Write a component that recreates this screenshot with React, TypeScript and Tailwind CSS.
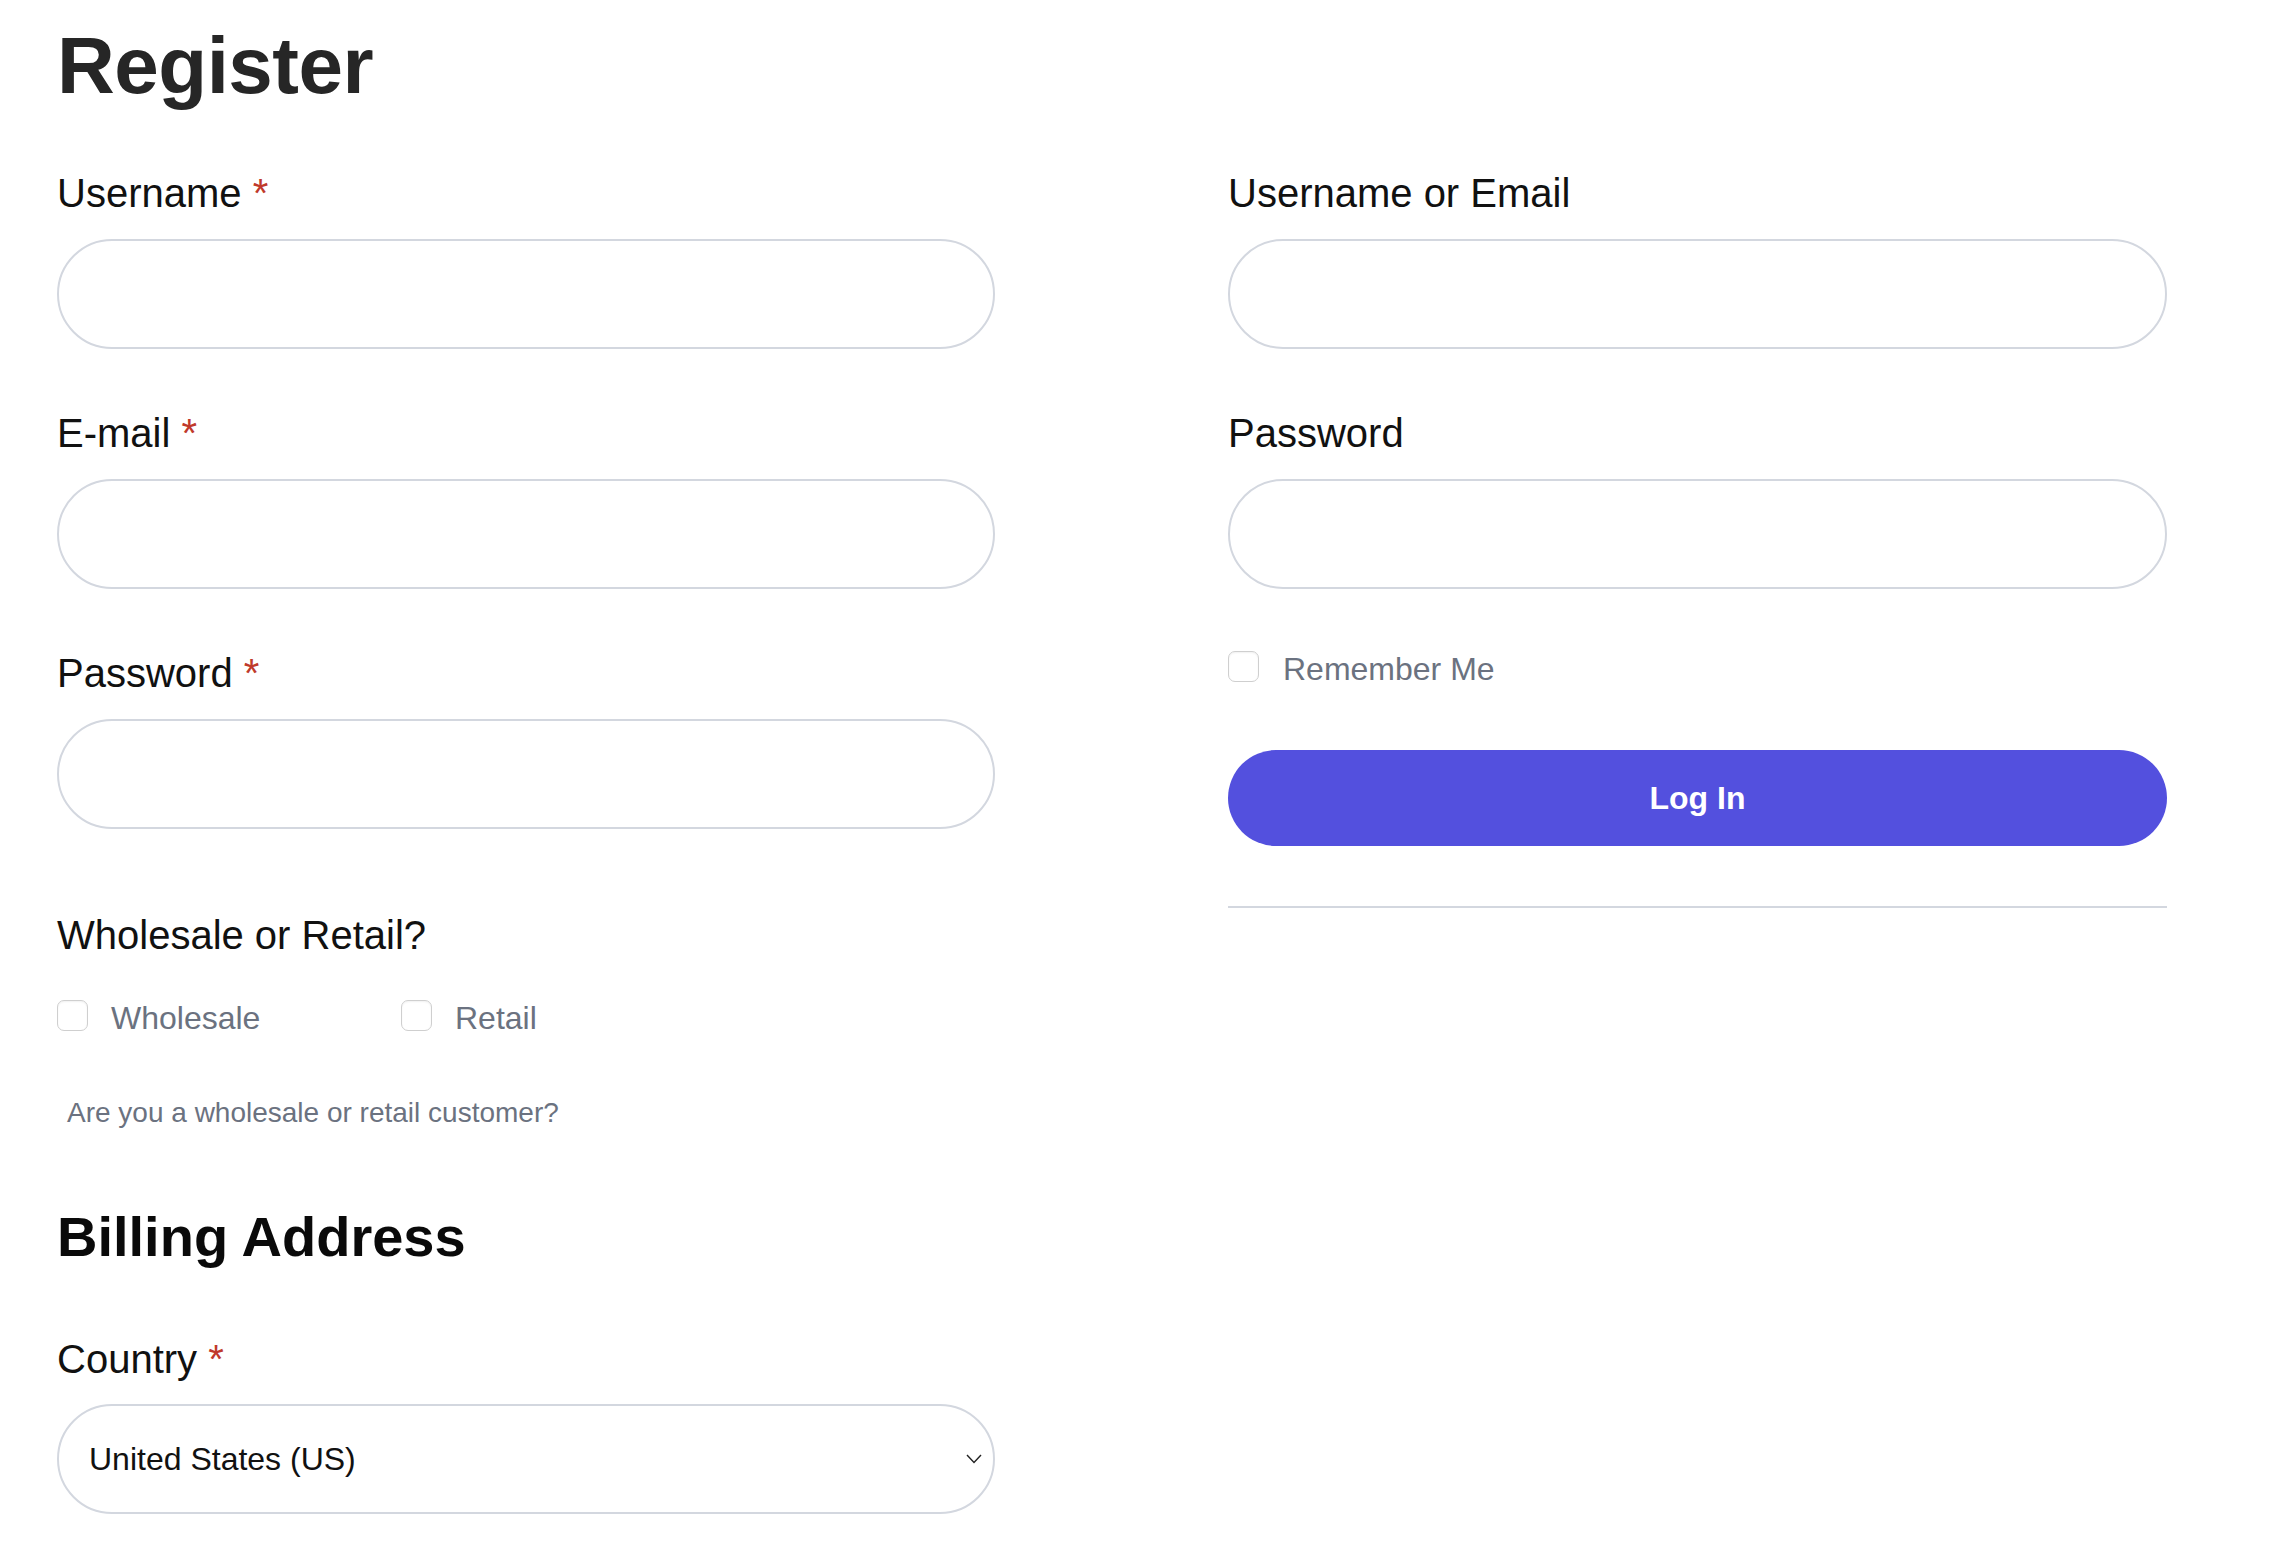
import { useState } from "react";

const font = "font-['Liberation_Sans',Arial,Helvetica,sans-serif]";

function Required() {
  return <span className="text-[#c0392b]"> *</span>;
}

function Field({ label, required, type = "text", last }: { label: string; required?: boolean; type?: string; last?: boolean }) {
  return (
    <div className={last ? "" : "mb-[64px]"}>
      <label className="block text-[40px] leading-none text-[#111111] mb-[26px]">
        {label}
        {required && <Required />}
      </label>
      <input
        type={type}
        className="block w-full h-[110px] rounded-full border-2 border-[#d3d7df] bg-white px-[30px] text-[32px] outline-none"
      />
    </div>
  );
}

function Check({ label, className = "" }: { label: string; className?: string }) {
  const [checked, setChecked] = useState(false);
  return (
    <label className={`flex items-start gap-[23px] cursor-pointer ${className}`}>
      <input
        type="checkbox"
        checked={checked}
        onChange={() => setChecked(!checked)}
        className="appearance-none shrink-0 w-[31px] h-[31px] rounded-[7px] border border-[#cfcfcf] bg-white shadow-[inset_0_1px_2px_rgba(0,0,0,0.06)] checked:bg-[#5350de] checked:border-[#5350de]"
      />
      <span className="mt-[2px] text-[32px] leading-none text-[#6b7280]">{label}</span>
    </label>
  );
}

export default function App() {
  return (
    <div className={`${font} min-h-screen bg-white pt-[26px] px-[57px]`}>
      <div className="flex gap-[233px]">
        {/* Register */}
        <div className="w-[938px] shrink-0">
          <h1 className="text-[80px] leading-none font-bold tracking-[-0.5px] text-[#262626] mb-[67px]">Register</h1>

          <Field label="Username" required />
          <Field label="E-mail" required type="email" />
          <Field label="Password" required type="password" last />

          <p className="mt-[86px] text-[40px] leading-none text-[#111111]">Wholesale or Retail?</p>
          <div className="mt-[45px] flex">
            <Check label="Wholesale" className="w-[344px]" />
            <Check label="Retail" />
          </div>
          <p className="mt-[65px] ml-[10px] text-[28px] leading-none text-[#6b7280]">Are you a wholesale or retail customer?</p>

          <h2 className="mt-[82px] text-[56px] leading-none font-bold text-[#0a0a0a]">Billing Address</h2>

          <label className="block mt-[74px] text-[40px] leading-none text-[#111111] mb-[25px]">
            Country
            <Required />
          </label>
          <div className="relative">
            <select
              defaultValue="US"
              className="block w-full h-[110px] appearance-none rounded-full border-2 border-[#d3d7df] bg-white pl-[30px] pr-[50px] text-[32px] text-[#111111] outline-none"
            >
              <option value="US">United States (US)</option>
              <option value="CA">Canada</option>
              <option value="GB">United Kingdom (UK)</option>
            </select>
            <svg
              className="pointer-events-none absolute right-[13px] top-1/2 -translate-y-1/2"
              width="16"
              height="10"
              viewBox="0 0 16 10"
              fill="none"
            >
              <polyline points="1,1 8,8.5 15,1" stroke="#222" strokeWidth="1.4" />
            </svg>
          </div>
        </div>

        {/* Login */}
        <div className="w-[939px] shrink-0 pt-[147px]">
          <Field label="Username or Email" />
          <Field label="Password" type="password" last />

          <Check label="Remember Me" className="mt-[62px] gap-[24px]" />

          <button className="mt-[65px] w-full h-[96px] rounded-full bg-[#5350de] text-white text-[32px] font-bold leading-none">
            Log In
          </button>

          <div className="mt-[60px] h-[2px] bg-[#d3d7df]" />
        </div>
      </div>
    </div>
  );
}
